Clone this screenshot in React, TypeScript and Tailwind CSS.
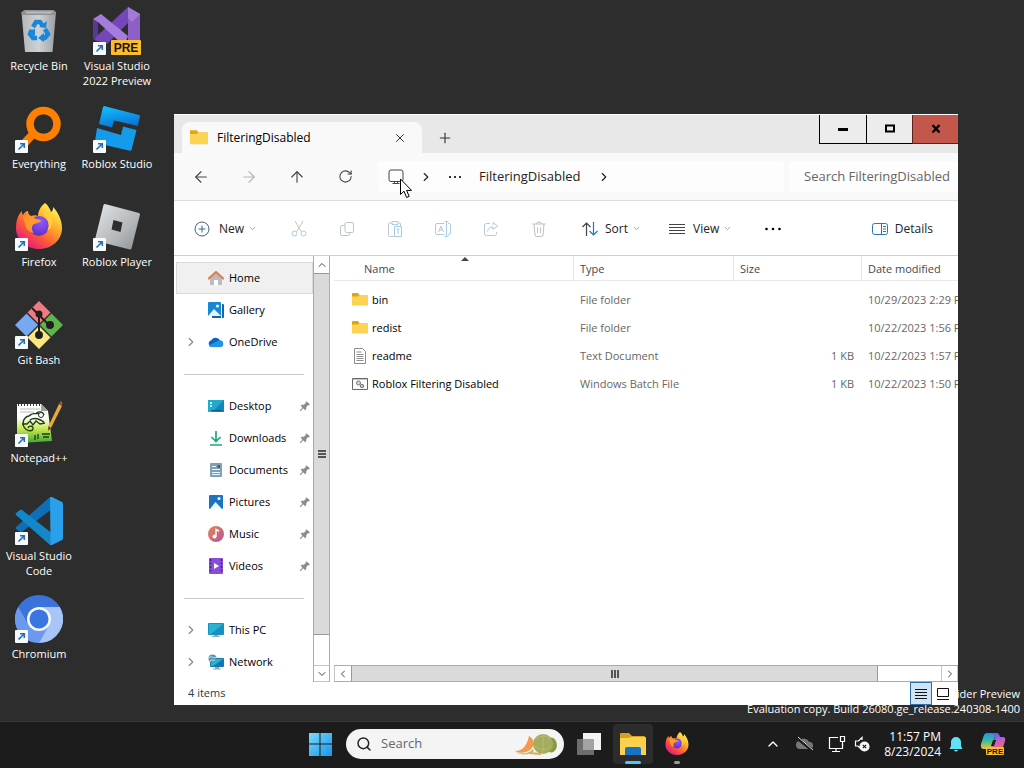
import React from 'react'
import {
  ArrowLeft,
  ArrowRight,
  ArrowUp,
  ChevronDown,
  ChevronLeft,
  ChevronRight,
  ChevronUp,
  Plus,
  RotateCw,
  Search,
  X,
} from 'lucide-react'

interface DesktopItem {
  name: string
  icon: React.ReactNode
  shortcut?: boolean
}

interface NavItemProps {
  name: string
  icon: React.ReactNode
  expandable?: boolean
  pinned?: boolean
  active?: boolean
}

interface FileRow {
  name: string
  icon: React.ReactNode
  type: string
  size: string
  date: string
}

/* ---------- desktop icons ---------- */

function RecycleIcon() {
  return (
    <svg viewBox="0 0 48 48" className="h-12 w-12">
      <defs>
        <linearGradient id="bin" x1="0" y1="0" x2="1" y2="0">
          <stop offset="0" stopColor="#b3b7ba" />
          <stop offset="0.5" stopColor="#cfd2d4" />
          <stop offset="1" stopColor="#9b9fa2" />
        </linearGradient>
      </defs>
      <path d="M6.500 5h34.500l-3.500 40H10z" fill="url(#bin)" />
      <path d="M6.500 5l3-2h29l2.500 2-1 3H7z" fill="#8f9396" />
      <path d="M10 4.500h28l-2 2H12z" fill="#b9bdbf" />
      <g fill="none" stroke="#1a86d9" strokeWidth="4.500">
        <path d="M18 20l3-5h4l3 4" />
        <path d="M30 22l3 5-3 4h-4" />
        <path d="M22 31h-4l-3-4 2-4" />
      </g>
      <path d="M24 20l7 1 1-7zM29 26l-6 5 6 4zM13 24l7-2 0 7z" fill="#1a86d9" />
    </svg>
  )
}

function VisualStudioIcon() {
  return (
    <svg viewBox="0 0 48 48" className="h-12 w-12">
      <path d="M0 12l5-1v24l-5-3z" fill="#5c3596" />
      <path d="M35 0l8 8-29 29-12-4 2-4z" fill="#7347b5" />
      <path d="M0 12l8-5 27 22-4 10L5 15z" fill="#a57bdc" />
      <path d="M35 0l12 7v34H35z" fill="#8b5fc6" />
      <path d="M35 0l12 7-8 8-4-4z" fill="#a47ad8" />
      <rect x="18" y="33" width="30" height="15" rx="1" fill="#fbbc32" />
      <text
        x="33"
        y="45"
        textAnchor="middle"
        fontFamily="Liberation Sans, sans-serif"
        fontWeight="700"
        fontSize="12"
        fill="#1b1405"
      >
        PRE
      </text>
    </svg>
  )
}

function EverythingIcon() {
  return (
    <svg viewBox="0 0 48 48" className="h-12 w-12" fill="none" stroke="#ff8000">
      <circle cx="28.500" cy="19" r="13.500" strokeWidth="7.500" />
      <path d="M18 29L6 42" strokeWidth="8" strokeLinecap="round" />
    </svg>
  )
}

function RobloxStudioIcon() {
  return (
    <svg viewBox="0 0 48 48" className="h-12 w-12">
      <defs>
        <linearGradient id="rs" x1="0" y1="0" x2="0.300" y2="1">
          <stop offset="0" stopColor="#13c4fb" />
          <stop offset="1" stopColor="#0b76d8" />
        </linearGradient>
      </defs>
      <path
        d="M11 1l35 9q1 .4 1 1.400L44.500 21 30 17.500 21 15.500 19 22.500 6 19 10 2z"
        fill="url(#rs)"
      />
      <path
        d="M4 23l24 7 2-8.500 13.500 3.500-5 20q-.5 1-1.500.8L3 38q-1-.4-1-1.500z"
        fill="#149bea"
      />
    </svg>
  )
}

function FirefoxIcon({ className }: { className: string }) {
  return (
    <svg viewBox="0 0 48 48" className={className}>
      <defs>
        <linearGradient id="fox" x1="0.850" y1="0.100" x2="0.200" y2="0.950">
          <stop offset="0" stopColor="#fff44f" />
          <stop offset="0.350" stopColor="#ffa72a" />
          <stop offset="0.650" stopColor="#ff5a36" />
          <stop offset="1" stopColor="#e31587" />
        </linearGradient>
        <radialGradient id="globe" cx="0.600" cy="0.300" r="0.800">
          <stop offset="0" stopColor="#9059ff" />
          <stop offset="1" stopColor="#5b2bb8" />
        </radialGradient>
      </defs>
      <path
        d="M30 0c3 2 5 6 6 9 2-1 2-3 2-5 5 5 9 13 9 21 0 12-10 21-23 21S1 37 1 25C1 17 3 12 7 8c0 2 0 3 1 4 1-2 3-4 5-4 0 2 1 4 3 5 3-1 5-1 7 0 0-5 3-10 7-13z"
        fill="url(#fox)"
      />
      <circle cx="24" cy="23" r="10" fill="url(#globe)" />
      <path
        d="M8 14c5-2 11 0 13 2 3 0 5 1 5 2-1 2-6 2-8 4-2 3-1 6 1 8-6-1-9-5-9-10z"
        fill="#ff9a2b"
      />
      <path d="M29 12c5 4 6 11 3 16 6-3 7-12 2-17-2-2-4-4-4-6-1 2-2 5-1 7z" fill="#ffcf3a" />
    </svg>
  )
}

function RobloxPlayerIcon() {
  return (
    <svg viewBox="0 0 48 48" className="h-12 w-12">
      <defs>
        <linearGradient id="rp" x1="0" y1="0" x2="1" y2="1">
          <stop offset="0" stopColor="#e4e6e8" />
          <stop offset="0.600" stopColor="#b4b8bb" />
          <stop offset="1" stopColor="#8d9194" />
        </linearGradient>
      </defs>
      <path
        fillRule="evenodd"
        d="M12 1l34 9q1 .5 1 1.500l-8.500 34q-.5 1-1.500 1L3 38q-1-.5-1-1.500L10.500 2Q11 1 12 1zM20.500 17l-2 9.500 9 2.500 2-9.500z"
        fill="url(#rp)"
      />
    </svg>
  )
}

function GitIcon() {
  return (
    <svg viewBox="0 0 48 48" className="h-12 w-12">
      <path d="M24 0l11.500 11.500L24 23 12.500 11.500z" fill="#ee7b82" />
      <path d="M11.500 12.500L23 24 11.500 35.500 0 24z" fill="#77a9f3" />
      <path d="M36.500 12.500L48 24 36.500 35.500 25 24z" fill="#5db54b" />
      <path d="M24 25l11.500 11.500L24 48 12.500 36.500z" fill="#fbe77d" />
      <g stroke="#231f20" strokeWidth="2" fill="#231f20">
        <path d="M17 7l7 7v20M24 14l10 10" fill="none" />
        <circle cx="24" cy="13" r="2.500" />
        <circle cx="24" cy="34" r="3" />
        <circle cx="35" cy="24" r="3" />
      </g>
    </svg>
  )
}

function NotepadIcon() {
  return (
    <svg viewBox="0 0 48 48" className="h-12 w-12">
      <defs>
        <linearGradient id="npp" x1="0" y1="0" x2="0" y2="1">
          <stop offset="0.350" stopColor="#ffffff" />
          <stop offset="0.650" stopColor="#c4e64a" />
          <stop offset="1" stopColor="#3da53a" />
        </linearGradient>
      </defs>
      <path d="M2 5h24l7 7 4 30-31 2-4-3z" fill="url(#npp)" />
      <path d="M26 5l7 7h-7z" fill="#9da09d" />
      <path d="M3 5.500h23" stroke="#333" strokeWidth="3" strokeDasharray="1 2" />
      <path d="M5 10h20M5 13h14" stroke="#b9bdb9" />
      <g fill="none" stroke="#1e3a12" strokeWidth="1.300">
        <path d="M28 17c-2-3-10-4-14 0-6 1-7 8-5 11 2 4 8 5 9 2s-4-4-5-1M7 25h5l3-3 3 4 3-4 4 3 5-1M21 15c1-3 7-3 8 1M15 21c4-3 10-1 14 2" />
        <path d="M20 36v5M23 35v5M27 35h8M28 38h6" />
      </g>
      <circle cx="26" cy="16" r="2.500" fill="#fff" stroke="#1e3a12" />
      <path d="M44 5l3 2-11 22-3 2 .5-4z" fill="#e9a93a" />
      <path d="M44 5l1.500-3 2 1-.5 4z" fill="#8c5a4b" />
      <path d="M33.500 27l2.500 2-3 3z" fill="#5d4120" />
    </svg>
  )
}

function VSCodeIcon() {
  return (
    <svg viewBox="0 0 48 48" className="h-12 w-12">
      <path d="M35 0l3 11L7 35q-1 .8-2 0l-4-3q-1-1 0-2z" fill="#0d6fb5" />
      <path d="M35 48l3-11L7 13q-1-.8-2 0l-4 3q-1 1 0 2z" fill="#1486ca" />
      <path d="M35 0q1-.5 2 0l10 5q1 .5 1 2v34q0 1.500-1 2l-10 5q-1 .5-2 0l.5-2z" fill="#2ba0ea" />
    </svg>
  )
}

function ChromiumIcon() {
  return (
    <svg viewBox="0 0 48 48" className="h-12 w-12">
      <circle cx="24" cy="24" r="24" fill="#3b73db" />
      <path d="M3.200 12A24 24 0 0 0 24 48l10.400-18L24 24 13.600 30z" fill="#6b99ee" />
      <path d="M24 48A24 24 0 0 0 44.800 12H24v12l10 6z" fill="#a9c5f7" />
      <circle cx="24" cy="24" r="12" fill="#f4f8ff" />
      <circle cx="24" cy="24" r="9.500" fill="#3a76e0" />
    </svg>
  )
}

/* ---------- small icons ---------- */

function FolderIcon({ className = 'h-4 w-4' }: { className?: string }) {
  return (
    <svg viewBox="0 0 16 16" className={className}>
      <path d="M0 1.500Q0 1 .5 1H6l1.500 2H16v3H0z" fill="#dfa515" />
      <path d="M0 4.500h6L7.500 3h8q.5 0 .5.5v9.500q0 .5-.5.500H.5q-.5 0-.5-.5z" fill="#fcd353" />
    </svg>
  )
}

function TextFileIcon() {
  return (
    <svg viewBox="0 0 16 16" className="h-4 w-4">
      <path d="M2.500.5h8l3 3v12h-11z" fill="#fdfdfd" stroke="#8b8b8b" />
      <path d="M4.500 4h5M4.500 6.500h7M4.500 8.500h7M4.500 10.500h7M4.500 12.500h7" stroke="#8f8f8f" />
    </svg>
  )
}

function BatchIcon() {
  return (
    <svg viewBox="0 0 16 16" className="h-4 w-4">
      <path d="M.5 2.500h15v11H.5z" fill="#fbfbfb" stroke="#666" />
      <path d="M1 3.500h14" stroke="#c9c9c9" />
      <circle cx="6.500" cy="7" r="2" fill="#d9d9d9" stroke="#777" />
      <circle cx="10" cy="10" r="1.700" fill="#c5c5c5" stroke="#777" />
    </svg>
  )
}

function PinIcon() {
  return (
    <svg viewBox="0 0 12 12" className="h-[10px] w-[10px]">
      <path d="M7 0l5 4-1.500 1-1 0-2 2.500V10L6 11 3.700 8.800 1 12H0v-1l2.800-3L1 5.500 2 4.500h2.500L7 2.500z" fill="#8c8c8c" />
    </svg>
  )
}

function HomeIcon() {
  return (
    <svg viewBox="0 0 16 16" className="h-4 w-4">
      <path d="M2 7l6-5 6 5v7.500q0 .5-.5.500H10v-5H6v5H2.500q-.5 0-.5-.5z" fill="#b9bdc3" />
      <path d="M.8 8.500L8 2l7.200 6.500" fill="none" stroke="#e37f4b" strokeWidth="2.200" strokeLinecap="round" strokeLinejoin="round" />
      <path d="M6 10h4v5H6z" fill="#fff" />
    </svg>
  )
}

function GalleryIcon() {
  return (
    <svg viewBox="0 0 16 16" className="h-4 w-4">
      <path d="M4 2h11q1 0 1 1v12q0 1-1 1H4z" fill="#1463ac" />
      <path d="M13.500 2v14" stroke="#fff" />
      <rect width="13" height="14" rx="1" fill="#1787d8" />
      <path d="M0 14l6-7 7 7z" fill="#e7f5ff" />
      <circle cx="9.500" cy="4" r="1.500" fill="#fff" />
    </svg>
  )
}

function OneDriveIcon() {
  return (
    <svg viewBox="0 0 16 16" className="h-4 w-4">
      <path d="M3.500 13A3.500 3.500 0 0 1 3.300 6.200 5 5 0 0 1 12 6.500 3.300 3.300 0 0 1 12.700 13z" fill="#0c62bd" />
      <path d="M3.300 13q-1.500 0-2.500-1.500L9.500 7q1.500-.8 3-.4A3.300 3.300 0 0 1 12.700 13z" fill="#1f95ea" />
    </svg>
  )
}

function DesktopFolderIcon() {
  return (
    <svg viewBox="0 0 16 16" className="h-4 w-4">
      <path d="M0 2h16v12H0z" fill="#1685ba" />
      <path d="M0 2h16L4 14H0z" fill="#24a9cc" />
      <path d="M2 4h2v2H2zM2 7h2v2H2z" fill="#c5f3fb" />
      <path d="M3 12.500h11" stroke="#0d5b8c" />
    </svg>
  )
}

function DownloadsIcon() {
  return (
    <svg viewBox="0 0 16 16" className="h-4 w-4" fill="none" stroke="#1fa97c" strokeWidth="1.700">
      <path d="M8 1v10M3.500 7L8 11.500 12.500 7M2 15h12" />
    </svg>
  )
}

function DocumentsIcon() {
  return (
    <svg viewBox="0 0 16 16" className="h-4 w-4">
      <rect x="2" y="1" width="12" height="14" rx="1" fill="#81a0b4" />
      <path d="M4 4.500h4M4 7.500h8M4 10.500h8M4 12.500h8" stroke="#e9f5fc" strokeWidth="1.200" />
      <path d="M9.500 3h2.500v3H9.500z" fill="#36627e" />
    </svg>
  )
}

function PicturesIcon() {
  return (
    <svg viewBox="0 0 16 16" className="h-4 w-4">
      <rect x="1" y="1" width="14" height="14" rx="1" fill="#1c74c0" />
      <path d="M2 15l5.500-7L14 15z" fill="#eef8ff" />
      <circle cx="11" cy="4.500" r="1.500" fill="#fff" />
    </svg>
  )
}

function MusicIcon() {
  return (
    <svg viewBox="0 0 16 16" className="h-4 w-4">
      <defs>
        <linearGradient id="music" x1="0" y1="0" x2="1" y2="1">
          <stop offset="0" stopColor="#e28a55" />
          <stop offset="1" stopColor="#b6529a" />
        </linearGradient>
      </defs>
      <circle cx="8" cy="8" r="8" fill="url(#music)" />
      <path d="M8 10.500V3.500l3 1.500" stroke="#fff" strokeWidth="1.400" fill="none" />
      <circle cx="6.500" cy="10.500" r="2" fill="#fff" />
    </svg>
  )
}

function VideosIcon() {
  return (
    <svg viewBox="0 0 16 16" className="h-4 w-4">
      <rect x="1" width="14" height="16" rx="1" fill="#8a4ed6" />
      <path d="M2.500 1v14M13.500 1v14" stroke="#4a2596" strokeWidth="1.500" strokeDasharray="2 1.500" />
      <path d="M6 5l5 3-5 3z" fill="#fff" />
    </svg>
  )
}

function PcIcon() {
  return (
    <svg viewBox="0 0 16 16" className="h-4 w-4">
      <path d="M6 12h4v2h2v1H4v-1h2z" fill="#9aa5ad" />
      <rect y="1" width="16" height="12" rx="1" fill="#1590c0" />
      <path d="M1 2h14L3 12H1z" fill="#28b3d3" />
    </svg>
  )
}

function NetworkIcon() {
  return (
    <svg viewBox="0 0 16 16" className="h-4 w-4">
      <path d="M7 13h4v1.500h2v1H5v-1h2z" fill="#9aa5ad" />
      <rect x="2" y="4" width="14" height="9" rx="1" fill="#1279b0" />
      <path d="M3 5h12L5 12H3z" fill="#28b3d3" />
      <circle cx="4.500" cy="4.500" r="4" fill="#4f9bb5" />
      <path d="M1 4c2-3 5 1 7-1M2 7c2-2 3 0 5-1" stroke="#c7e7ef" fill="none" />
    </svg>
  )
}

function MonitorIcon() {
  return (
    <svg viewBox="0 0 16 16" className="h-4 w-4" fill="none" stroke="#444">
      <rect x="1" y="1" width="14" height="11.500" rx="2" />
      <path d="M4.500 14.500h7M6.500 12v2.500M9.500 12v2.500" />
    </svg>
  )
}

/* ---------- data ---------- */

const desktopItems: DesktopItem[] = [
  { name: 'Recycle Bin', icon: <RecycleIcon /> },
  { name: 'Everything', icon: <EverythingIcon />, shortcut: true },
  { name: 'Firefox', icon: <FirefoxIcon className="h-12 w-12" />, shortcut: true },
  { name: 'Git Bash', icon: <GitIcon />, shortcut: true },
  { name: 'Notepad++', icon: <NotepadIcon />, shortcut: true },
  { name: 'Visual Studio Code', icon: <VSCodeIcon />, shortcut: true },
  { name: 'Chromium', icon: <ChromiumIcon />, shortcut: true },
  { name: 'Visual Studio 2022 Preview', icon: <VisualStudioIcon />, shortcut: true },
  { name: 'Roblox Studio', icon: <RobloxStudioIcon />, shortcut: true },
  { name: 'Roblox Player', icon: <RobloxPlayerIcon />, shortcut: true },
]

const files: FileRow[] = [
  { name: 'bin', icon: <FolderIcon />, type: 'File folder', size: '', date: '10/29/2023 2:29 PM' },
  { name: 'redist', icon: <FolderIcon />, type: 'File folder', size: '', date: '10/22/2023 1:56 PM' },
  { name: 'readme', icon: <TextFileIcon />, type: 'Text Document', size: '1 KB', date: '10/22/2023 1:57 PM' },
  {
    name: 'Roblox Filtering Disabled',
    icon: <BatchIcon />,
    type: 'Windows Batch File',
    size: '1 KB',
    date: '10/22/2023 1:50 PM',
  },
]

/* ---------- desktop ---------- */

function DesktopIcon({ name, icon, shortcut }: DesktopItem) {
  return (
    <button className="flex flex-col items-center gap-[3px] pt-[7px] text-white">
      <span className="relative block h-12 w-12">
        {icon}
        {shortcut && (
          <svg viewBox="0 0 13 13" className="absolute bottom-0 left-0 h-[13px] w-[13px]">
            <rect width="13" height="13" rx="1" fill="#f7fafc" />
            <path d="M3.500 9.500L8.500 4.500M5 3.800h4.300V8" fill="none" stroke="#2a6fb0" strokeWidth="1.600" />
          </svg>
        )}
      </span>
      <span className="w-[76px] text-center text-[11px] leading-[15px]">{name}</span>
    </button>
  )
}

/* ---------- explorer ---------- */

function NavItem({ name, icon, expandable, pinned, active }: NavItemProps) {
  return (
    <li>
      <a
        href="#"
        className={`ml-[2px] flex h-8 items-center pr-[2px] text-[11px] text-black ${
          active ? 'border border-[#d9d9d9] bg-[#f0f0f0]' : 'border border-transparent'
        }`}
      >
        <span className="flex w-[31px] shrink-0 pl-[7px]">
          {expandable && <ChevronRight className="h-[14px] w-[14px] text-[#888]" />}
        </span>
        {icon}
        <span className="ml-[5px] flex-1 whitespace-nowrap">{name}</span>
        {pinned && <PinIcon />}
      </a>
    </li>
  )
}

function Divider() {
  return (
    <li className="flex h-8 items-center pl-[10px] pr-[9px]">
      <hr className="w-full border-[#c8c8c8]" />
    </li>
  )
}

function TitleBar() {
  return (
    <div className="flex h-[39px] shrink-0 border-t border-white bg-[#e8e8e8]">
      <div className="ml-2 mt-[7px] flex w-[240px] items-center rounded-t-lg bg-[#f9f9f9] pl-2 pr-[15px]">
        <FolderIcon className="h-[18px] w-[18px]" />
        <span className="ml-[9px] flex-1 text-xs text-black">FilteringDisabled</span>
        <button aria-label="Close tab">
          <X className="h-[14px] w-[14px] text-[#333]" strokeWidth={1.7} />
        </button>
      </div>
      <button aria-label="New tab" className="flex w-[45px] items-center justify-center pt-[7px]">
        <Plus className="h-4 w-4 text-[#333]" strokeWidth={1.7} />
      </button>
      <div className="ml-auto flex h-[29px]">
        <button
          aria-label="Minimize"
          className="flex w-[47px] items-center justify-center border-b border-l border-black bg-[#ececec]"
        >
          <svg viewBox="0 0 12 12" className="h-3 w-3">
            <path d="M1 5h10v3H1z" />
          </svg>
        </button>
        <button
          aria-label="Maximize"
          className="flex w-[46px] items-center justify-center border-b border-l border-black bg-[#ececec]"
        >
          <svg viewBox="0 0 12 12" className="h-3 w-3">
            <path d="M2 2.500h8v6H2z" fill="none" stroke="#000" strokeWidth="2" />
          </svg>
        </button>
        <button
          aria-label="Close"
          className="flex w-[46px] items-center justify-center border-b border-l border-[#5b221d] bg-[#c4574c]"
        >
          <svg viewBox="0 0 12 12" className="h-3 w-3">
            <path d="M2.500 2l7 7.500M9.500 2l-7 7.500" stroke="#000" strokeWidth="2.400" />
          </svg>
        </button>
      </div>
    </div>
  )
}

function AddressBar() {
  const navButton = 'flex w-12 items-center justify-center text-[#444]'
  return (
    <div className="flex h-12 shrink-0 border-b border-[#dedede] bg-[#f9f9f9] pl-[3px]">
      <button aria-label="Back" className={navButton}>
        <ArrowLeft className="h-[18px] w-[18px]" strokeWidth={1.5} />
      </button>
      <button aria-label="Forward" className={navButton} disabled>
        <ArrowRight className="h-[18px] w-[18px] text-[#b5b5b5]" strokeWidth={1.5} />
      </button>
      <button aria-label="Up" className={navButton}>
        <ArrowUp className="h-[18px] w-[18px]" strokeWidth={1.5} />
      </button>
      <button aria-label="Refresh" className={navButton}>
        <RotateCw className="h-[15px] w-[15px]" strokeWidth={1.7} />
      </button>
      <div className="my-2 ml-[9px] flex flex-1 items-center rounded bg-[#fdfdfd] pl-[10px] text-[13px] text-[#222]">
        <MonitorIcon />
        <ChevronRight className="ml-[15px] h-[14px] w-[14px]" />
        <svg viewBox="0 0 12 2" className="ml-4 h-[2px] w-3">
          <path d="M0 0h2v2H0zM5 0h2v2H5zM10 0h2v2h-2z" fill="#333" />
        </svg>
        <span className="ml-[18px]">FilteringDisabled</span>
        <ChevronRight className="ml-[17px] h-[14px] w-[14px]" />
      </div>
      <input
        aria-label="Search FilteringDisabled"
        placeholder="Search FilteringDisabled"
        className="my-2 ml-[5px] w-[169px] rounded-l bg-[#fdfdfd] pl-[15px] text-[13px] text-[#222] placeholder:text-[#666]"
      />
    </div>
  )
}

function Toolbar() {
  const iconButton = 'flex w-12 items-center justify-center'
  return (
    <div className="flex h-[55px] shrink-0 border-b border-[#cfcfcf] bg-white pl-5 pt-px text-xs text-[#222]">
      <button className="flex w-[81px] items-center">
        <svg viewBox="0 0 16 16" className="h-4 w-4" fill="none">
          <circle cx="8" cy="8" r="7" stroke="#46606e" />
          <path d="M8 4.500v7M4.500 8h7" stroke="#2b6ea0" />
        </svg>
        <span className="ml-[9px]">New</span>
        <ChevronDown className="ml-1 h-[9px] w-[9px] text-[#888]" />
      </button>
      <button aria-label="Cut" className={iconButton} disabled>
        <svg viewBox="0 0 16 16" className="h-4 w-4" fill="none">
          <path d="M4 0l6.500 11" stroke="#e0bba6" />
          <path d="M12 0L5.500 11" stroke="#c6c6c6" />
          <circle cx="3.500" cy="12.500" r="2.500" stroke="#a9cde4" />
          <circle cx="12.500" cy="12.500" r="2.500" stroke="#a9cde4" />
        </svg>
      </button>
      <button aria-label="Copy" className={iconButton} disabled>
        <svg viewBox="0 0 16 16" className="h-4 w-4" fill="none">
          <rect x="6" y="1.500" width="8.500" height="10" rx="1.500" stroke="#bcc7ce" />
          <path d="M6 4.500H3Q1.500 4.500 1.500 6v7q0 1.500 1.500 1.500h6q1.500 0 1.500-1.500v-1.500" stroke="#bcc7ce" />
        </svg>
      </button>
      <button aria-label="Paste" className={iconButton} disabled>
        <svg viewBox="0 0 16 16" className="h-4 w-4" fill="none">
          <path d="M5 2H2.500Q1.500 2 1.500 3v11.500q0 1 1 1H7M11 2h1.500q1 0 1 1v2" stroke="#c3c6c8" />
          <path d="M5 .5h6v3H5zM7.500 5.500h7v10h-7z" stroke="#a9cde4" />
          <path d="M9.500 8h3M11 8v5" stroke="#a9cde4" />
        </svg>
      </button>
      <button aria-label="Rename" className={iconButton} disabled>
        <svg viewBox="0 0 16 16" className="h-4 w-4" fill="none" stroke="#a9cde4">
          <path d="M9.500 2.500H2Q.5 2.500.5 4v8q0 1.500 1.500 1.500h7.500M13 2.500h1q1.500 0 1.500 1.500v8q0 1.500-1.500 1.500h-1M11.500.5v15M9.500.5h4M9.500 15.500h4" />
          <path d="M3.500 11L6 5l2.500 6M4.500 9h3" stroke="#bfc5c9" />
        </svg>
      </button>
      <button aria-label="Share" className={iconButton} disabled>
        <svg viewBox="0 0 16 16" className="h-4 w-4" fill="none" stroke="#bcc7ce">
          <path d="M7 2.500H3.500q-2 0-2 2v8q0 2 2 2h8q2 0 2-2V11" />
          <path d="M4.500 10.500c.5-3 2.500-4.500 5.500-4.500V8.500L14.500 5 10 1.500V4" stroke="#a9cde4" />
        </svg>
      </button>
      <button aria-label="Delete" className={iconButton} disabled>
        <svg viewBox="0 0 16 16" className="h-4 w-4" fill="none" stroke="#c0c0c0">
          <path d="M1.500 3h13M5.500 3q0-2 2.500-2t2.500 2M3 3l1 11q0 1.500 1.500 1.500h5q1.500 0 1.500-1.500l1-11M6.500 6.500v5.500M9.500 6.500v5.500" />
        </svg>
      </button>
      <button className="ml-[18px] flex w-[88px] items-center">
        <svg viewBox="0 0 18 16" className="h-4 w-[18px]" fill="none" strokeWidth="1.200">
          <path d="M5.500 15V2M1.500 6l4-4 4 4" stroke="#444" />
          <path d="M12.500 1v13M8.500 10l4 4 4-4" stroke="#1c7ac0" />
        </svg>
        <span className="ml-[6px]">Sort</span>
        <ChevronDown className="ml-1 h-[9px] w-[9px] text-[#888]" />
      </button>
      <button className="flex w-20 items-center">
        <svg viewBox="0 0 16 16" className="h-4 w-4">
          <path d="M0 3.500h16M0 6.500h16M0 9.500h16M0 12.500h16" stroke="#444" />
        </svg>
        <span className="ml-2">View</span>
        <ChevronDown className="ml-1 h-[9px] w-[9px] text-[#888]" />
      </button>
      <button aria-label="See more" className={iconButton}>
        <svg viewBox="0 0 16 4" className="h-1 w-4">
          <circle cx="1.500" cy="2" r="1.300" />
          <circle cx="8" cy="2" r="1.300" />
          <circle cx="14.500" cy="2" r="1.300" />
        </svg>
      </button>
      <button className="ml-auto flex items-center pr-[25px]">
        <svg viewBox="0 0 16 16" className="h-4 w-4" fill="none" stroke="#2878b4">
          <rect x=".5" y="2.500" width="15" height="11" rx="2" />
          <path d="M9.500 2.500v11M11 5.500h3M11 8h3M11 10.500h3" />
        </svg>
        <span className="ml-[7px]">Details</span>
      </button>
    </div>
  )
}

function Sidebar() {
  return (
    <div className="flex w-[156px] shrink-0">
      <nav className="w-[139px] overflow-hidden pt-[6px]">
        <ul>
          <NavItem name="Home" icon={<HomeIcon />} active />
          <NavItem name="Gallery" icon={<GalleryIcon />} />
          <NavItem name="OneDrive" icon={<OneDriveIcon />} expandable />
          <Divider />
          <NavItem name="Desktop" icon={<DesktopFolderIcon />} pinned />
          <NavItem name="Downloads" icon={<DownloadsIcon />} pinned />
          <NavItem name="Documents" icon={<DocumentsIcon />} pinned />
          <NavItem name="Pictures" icon={<PicturesIcon />} pinned />
          <NavItem name="Music" icon={<MusicIcon />} pinned />
          <NavItem name="Videos" icon={<VideosIcon />} pinned />
          <Divider />
          <NavItem name="This PC" icon={<PcIcon />} expandable />
          <NavItem name="Network" icon={<NetworkIcon />} expandable />
        </ul>
      </nav>
      <div className="flex w-[17px] flex-col border-x border-[#ababab] bg-white">
        <button aria-label="Scroll up" className="flex h-[17px] items-center justify-center">
          <ChevronUp className="h-3 w-3 text-[#444]" />
        </button>
        <div className="flex flex-1 items-center justify-center border-y border-[#999] bg-[#dadada]">
          <svg viewBox="0 0 8 8" className="h-2 w-2">
            <path d="M0 0h8v2H0zM0 3h8v2H0zM0 6h8v2H0z" fill="#555" />
          </svg>
        </div>
        <div className="h-[30px]"></div>
        <button
          aria-label="Scroll down"
          className="flex h-[17px] items-center justify-center border-y border-[#c4c4c4]"
        >
          <ChevronDown className="h-3 w-3 text-[#444]" />
        </button>
      </div>
    </div>
  )
}

function FileList() {
  const heading = 'h-[25px] border-b border-[#e8e8e8] pt-[2px] text-left font-normal text-[#44494f]'
  return (
    <div className="min-h-0 flex-1 overflow-hidden">
      <table className="w-[690px] table-fixed border-separate border-spacing-0 text-[11px]">
        <colgroup>
          <col className="w-[240px]" />
          <col className="w-[160px]" />
          <col className="w-[128px]" />
          <col />
        </colgroup>
        <thead>
          <tr>
            <th className={`${heading} relative border-r pl-[30px]`}>
              Name
              <svg viewBox="0 0 8 4" className="absolute left-[127px] top-px h-1 w-2">
                <path d="M0 4l4-4 4 4z" fill="#444" />
              </svg>
            </th>
            <th className={`${heading} border-r pl-[6px]`}>Type</th>
            <th className={`${heading} border-r pl-[6px]`}>Size</th>
            <th className={`${heading} pl-[6px]`}>Date modified</th>
          </tr>
        </thead>
        <tbody className="before:block before:h-[5px]">
          {files.map((file) => (
            <tr key={file.name} className="h-7 whitespace-nowrap text-[#666]">
              <td className="pl-[18px] text-black">
                <span className="flex items-center gap-1">
                  {file.icon}
                  {file.name}
                </span>
              </td>
              <td className="pl-[6px]">{file.type}</td>
              <td className="pr-2 text-right">{file.size}</td>
              <td className="pl-[6px]">{file.date}</td>
            </tr>
          ))}
        </tbody>
      </table>
    </div>
  )
}

function HorizontalScrollbar() {
  return (
    <div className="flex h-[17px] shrink-0 border-y border-[#ababab] bg-white">
      <button
        aria-label="Scroll left"
        className="flex w-[17px] items-center justify-center border-l border-[#c4c4c4]"
      >
        <ChevronLeft className="h-3 w-3 text-[#444]" />
      </button>
      <div className="flex flex-1 items-center justify-center border-x border-[#999] bg-[#dadada]">
        <svg viewBox="0 0 8 8" className="h-2 w-2">
          <path d="M0 0h2v8H0zM3 0h2v8H3zM6 0h2v8H6z" fill="#555" />
        </svg>
      </div>
      <div className="w-[63px]"></div>
      <button
        aria-label="Scroll right"
        className="flex w-[17px] items-center justify-center border-x border-[#c4c4c4]"
      >
        <ChevronRight className="h-3 w-3 text-[#444]" />
      </button>
    </div>
  )
}

function StatusBar() {
  return (
    <div className="flex h-[23px] shrink-0 items-center pl-[14px] text-[11px] text-[#2b3a4f]">
      <span>4 items</span>
      <button
        aria-label="Details view"
        className="ml-auto flex h-[23px] w-[22px] items-center justify-center border border-[#2f6fa8] bg-[#cfe4f7]"
      >
        <svg viewBox="0 0 12 12" className="h-3 w-3">
          <path d="M0 1.500h12M0 4.500h12M0 7.500h12M0 10.500h12" stroke="#111" />
        </svg>
      </button>
      <button aria-label="Large icons" className="flex h-[23px] w-[22px] items-center justify-center">
        <svg viewBox="0 0 12 12" className="h-3 w-3" fill="none" stroke="#111">
          <path d="M.5.5h11v8H.5zM0 11.500h12" />
        </svg>
      </button>
      <span className="w-1"></span>
    </div>
  )
}

function ExplorerWindow() {
  return (
    <main className="absolute bottom-4 left-[174px] right-[66px] top-[114px] flex flex-col overflow-hidden bg-white">
      <TitleBar />
      <AddressBar />
      <Toolbar />
      <div className="flex min-h-0 flex-1">
        <Sidebar />
        <div className="ml-1 flex min-w-0 flex-1 flex-col">
          <FileList />
          <HorizontalScrollbar />
        </div>
      </div>
      <StatusBar />
    </main>
  )
}

/* ---------- taskbar ---------- */

function Taskbar() {
  return (
    <footer className="flex h-[47px] shrink-0 items-center border-t border-[#383838] bg-[#1c1c1c] pb-[2px] pl-[308px] pr-[18px] text-white">
      <button aria-label="Start">
        <svg viewBox="0 0 24 24" className="h-6 w-6">
          <defs>
            <linearGradient id="win" x1="0" y1="0" x2="1" y2="1">
              <stop offset="0" stopColor="#7ad9fb" />
              <stop offset="1" stopColor="#1795ea" />
            </linearGradient>
          </defs>
          <path d="M1 1h10.500v10.500H1zM12.500 1H24v10.500H12.500zM1 12.500h10.500V24H1zM12.500 12.500H24V24H12.500z" fill="url(#win)" />
        </svg>
      </button>
      <div className="ml-[14px] flex h-[30px] w-[218px] items-center rounded-full bg-[#f4f4f4] pl-[10px] pr-[5px]">
        <Search className="h-4 w-4 shrink-0 text-[#222]" strokeWidth={2.2} />
        <input
          aria-label="Search"
          placeholder="Search"
          className="ml-[9px] min-w-0 flex-1 bg-transparent text-[13px] text-[#222] placeholder:text-[#666]"
        />
        <svg viewBox="0 0 44 22" className="h-[22px] w-11 shrink-0">
          <path d="M0 18c8 0 12-6 14-15 5 3 6 8 3 12-4 5-12 6-17 3z" fill="#f29a4e" />
          <path d="M0 18c5 4 14 3 18-2l1 2c-4 4-15 5-19 0z" fill="#b8bb63" />
          <ellipse cx="36" cy="12" rx="6" ry="7.500" fill="#8f984a" />
          <circle cx="28" cy="11" r="10" fill="#a5ad5c" />
          <path d="M21 6c5-4 10-4 14 0M20 13c5 5 11 5 16 0M28 1v20" stroke="#b5bc74" fill="none" />
          <path d="M14 20l12 1" stroke="#d9ab5f" strokeWidth="2" />
        </svg>
      </div>
      <button aria-label="Task view" className="ml-[13px]">
        <svg viewBox="0 0 24 24" className="h-6 w-6">
          <path d="M6 1h18v17H6z" fill="#f3f3f3" />
          <path d="M0 7h17v16H0z" fill="#6d6d6d" />
          <path d="M6 7h11v11H6z" fill="#a3a3a3" />
        </svg>
      </button>
      <button
        aria-label="File Explorer"
        className="relative ml-3 flex h-10 w-10 items-center justify-center rounded bg-[#2c2c2c]"
      >
        <svg viewBox="0 0 26 24" className="h-6 w-[26px]">
          <path d="M0 2q0-1 1-1h8l3 3h12q1 0 1 1v6H0z" fill="#dba01a" />
          <path d="M0 6h9l2-1h14q1 0 1 1v17H0z" fill="#fbd04d" />
          <path d="M5 17q0-2 2-2h12q2 0 2 2v6H5z" fill="#1673c4" />
        </svg>
        <span className="absolute bottom-0 h-[3px] w-4 rounded bg-[#4cc9f0]"></span>
      </button>
      <button aria-label="Firefox" className="relative ml-3 flex h-10 items-center">
        <FirefoxIcon className="h-6 w-6" />
        <span className="absolute bottom-0 left-[9px] h-[3px] w-[6px] rounded bg-[#9a9a9a]"></span>
      </button>
      <div className="ml-auto flex items-center">
        <button aria-label="Show hidden icons">
          <ChevronUp className="h-4 w-4" />
        </button>
        <svg viewBox="0 0 18 16" className="ml-[15px] h-4 w-[18px]">
          <path d="M4 13a4 4 0 0 1 0-8 5 5 0 0 1 9 1 3.500 3.500 0 0 1 1 7z" fill="#777" />
          <path d="M1 2l15 12" stroke="#1c1c1c" strokeWidth="3" />
          <path d="M2 1l15 13" stroke="#ddd" />
        </svg>
        <svg viewBox="0 0 18 18" className="ml-[14px] h-[18px] w-[18px]" fill="none" stroke="#fff" strokeWidth="1.200">
          <path d="M10 2.500H1.500v11h13V9M4 16.500h8M8 13.500v3" />
          <path d="M12.500 1.500h4v5h-4zM14.500 6.500v5" />
        </svg>
        <svg viewBox="0 0 16 16" className="ml-2 h-4 w-4" fill="none" stroke="#fff" strokeWidth="1.200">
          <path d="M8 4V1.500L4.500 5H1.500v5H4l2 2" />
          <circle cx="10.500" cy="10.500" r="4.500" fill="#fff" />
          <path d="M8.800 8.800l3.400 3.400M12.200 8.800l-3.400 3.400" stroke="#1c1c1c" />
        </svg>
        <time className="ml-[15px] w-14 whitespace-nowrap text-right text-xs leading-[15px]">
          <span className="flex justify-end">11:57 PM</span>
          <span className="flex justify-end">8/23/2024</span>
        </time>
        <svg viewBox="0 0 16 16" className="ml-[7px] h-4 w-4">
          <path d="M8 1a5 5 0 0 1 5 5v4l1.500 3h-13L3 10V6a5 5 0 0 1 5-5zM6 14h4q-.5 1.500-2 1.500T6 14z" fill="#5fe3f4" />
        </svg>
        <svg viewBox="0 0 26 26" className="ml-4 h-[26px] w-[26px]">
          <defs>
            <linearGradient id="cpl" x1="0" y1="0" x2="0" y2="1">
              <stop offset="0" stopColor="#2a8ff0" />
              <stop offset="0.500" stopColor="#3cbd93" />
              <stop offset="1" stopColor="#f2c23b" />
            </linearGradient>
            <linearGradient id="cpr" x1="0" y1="0" x2="0.300" y2="1">
              <stop offset="0" stopColor="#2f6fe8" />
              <stop offset="0.500" stopColor="#b65ae0" />
              <stop offset="1" stopColor="#f57059" />
            </linearGradient>
          </defs>
          <path d="M7 2h9l-5 16H4q-4 0-3-5L4 4q1-2 3-2z" fill="url(#cpl)" />
          <path d="M12 2h5q2 0 3 4h3q3 0 2 4l-3 9H11l4-13z" fill="url(#cpr)" />
          <path d="M13 9h3l-2 6h-3z" fill="#1c1c1c" />
          <rect x="6" y="16" width="18" height="8" rx="1" fill="#fbbc32" />
          <text
            x="15"
            y="23"
            textAnchor="middle"
            fontFamily="Liberation Sans, sans-serif"
            fontWeight="700"
            fontSize="8"
            fill="#1b1405"
          >
            PRE
          </text>
        </svg>
      </div>
    </footer>
  )
}

export default function App() {
  return (
    <div className="flex h-screen flex-col overflow-hidden bg-[#2d2d2d] font-['Open_Sans','Noto_Sans',sans-serif]">
      <div className="relative flex min-h-0 flex-1 items-start justify-between">
        <div className="grid auto-cols-[78px] grid-flow-col grid-rows-[repeat(7,98px)] items-start">
          {desktopItems.map((item) => (
            <DesktopIcon key={item.name} {...item} />
          ))}
        </div>
        <p className="self-end pb-[5px] pr-1 text-right text-[11px] leading-[15px] text-white">
          Insider Preview
          <br />
          Evaluation copy. Build 26080.ge_release.240308-1400
        </p>
        <ExplorerWindow />
        <svg viewBox="0 0 12 21" className="absolute left-[400px] top-[178px] h-[21px] w-3">
          <path d="M.5 1v15.500l3.500-3.300 2.600 6.300 2.600-1.100-2.600-6h5z" fill="#fff" stroke="#000" />
        </svg>
      </div>
      <Taskbar />
    </div>
  )
}
